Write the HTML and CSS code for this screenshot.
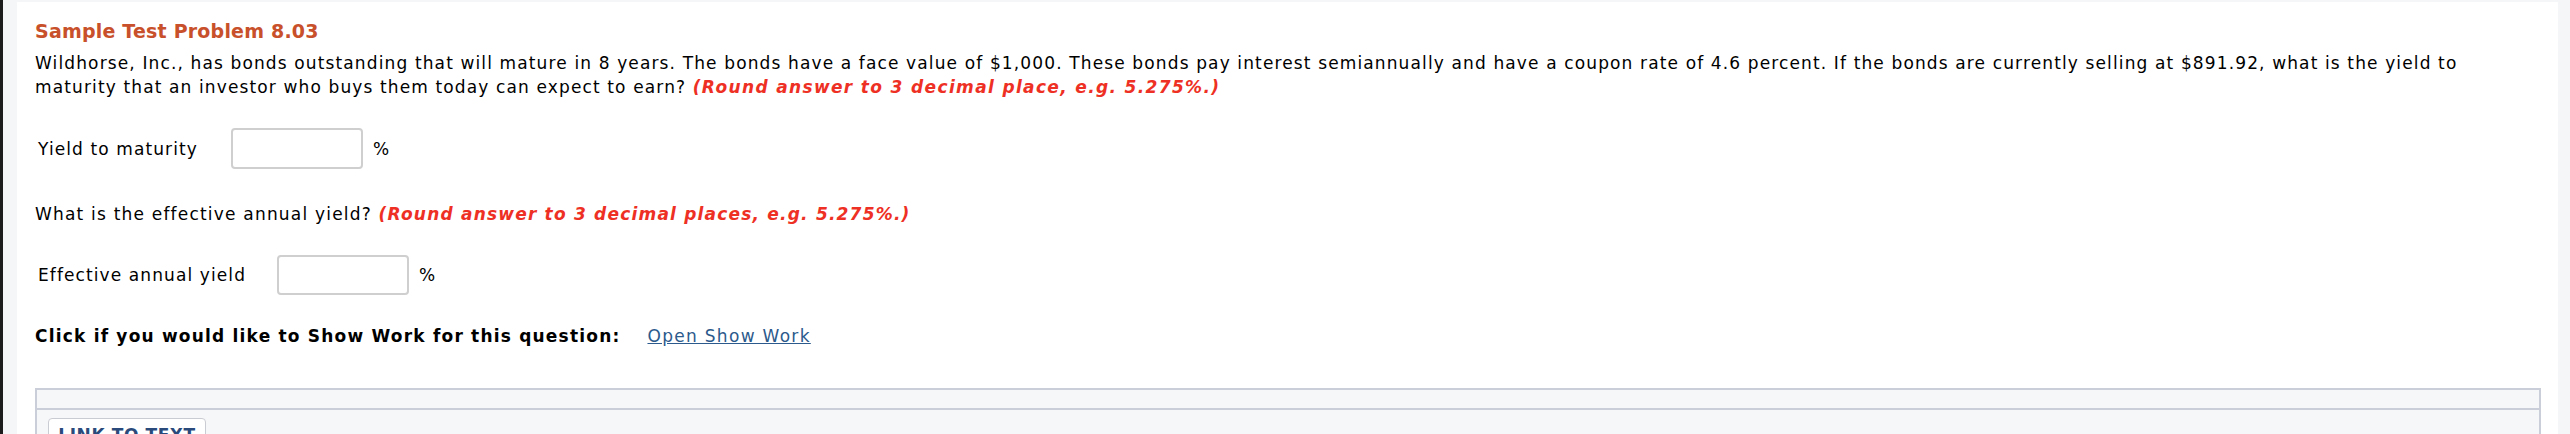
FILE: index.html
```html
<!DOCTYPE html>
<html>
<head>
<meta charset="utf-8">
<link rel="stylesheet" href="styles.css">
</head>
<body>
<div class="page">
  <h2 class="title">Sample Test Problem 8.03</h2>
  <p class="question">Wildhorse, Inc., has bonds outstanding that will mature in 8 years. The bonds have a face value of $1,000. These bonds pay interest semiannually and have a coupon rate of 4.6 percent. If the bonds are currently selling at $891.92, what is the yield to maturity that an investor who buys them today can expect to earn? <em class="hint">(Round answer to 3 decimal place, e.g. 5.275%.)</em></p>
  <div class="answer-row">
    <span class="label">Yield to maturity</span>
    <input class="answer" type="text">
    <span class="unit">%</span>
  </div>
  <p class="question q2">What is the effective annual yield? <em class="hint">(Round answer to 3 decimal places, e.g. 5.275%.)</em></p>
  <div class="answer-row row2">
    <span class="label">Effective annual yield</span>
    <input class="answer" type="text">
    <span class="unit">%</span>
  </div>
  <div class="showwork">
    <strong class="sw-label">Click if you would like to Show Work for this question:</strong>
    <a class="sw-link" href="#">Open Show Work</a>
  </div>
  <div class="panel">
    <div class="panel-head"></div>
    <div class="panel-body">
      <button class="link-btn" type="button">LINK TO TEXT</button>
    </div>
  </div>
</div>
</body>
</html>
```
FILE: styles.css
```css
html, body {
  margin: 0;
  padding: 0;
  height: 100%;
  overflow: hidden;
}
body {
  background: #f5f6f8;
  border-left: 3px solid #1c1c1c;
  box-sizing: border-box;
  font-family: "DejaVu Sans", Verdana, sans-serif;
  color: #000;
}
.page {
  background: #fff;
  margin: 2px 12px 0 14px;
  padding: 18px 17px 0 18px;
  height: 432px;
  overflow: hidden;
  box-sizing: border-box;
}
.title {
  margin: 0;
  font-size: 19px;
  line-height: 22px;
  font-weight: bold;
  letter-spacing: 0.2px;
  color: #c8502a;
}
.question {
  margin: 9px 0 0 0;
  font-size: 17px;
  line-height: 24px;
  letter-spacing: 1.13px;
}
.hint {
  color: #ee3024;
  font-weight: bold;
  font-style: italic;
  letter-spacing: 1.35px;
}
.q2 .hint {
  letter-spacing: 1.2px;
}
.answer-row {
  display: flex;
  align-items: center;
  margin-top: 29px;
  font-size: 17px;
  letter-spacing: 1.1px;
}
.label {
  padding-left: 3px;
  width: 193px;
  white-space: nowrap;
}
.row2 .label {
  width: 239px;
}
.answer {
  width: 132px;
  height: 41px;
  box-sizing: border-box;
  border: 2px solid #cfcfcf;
  border-radius: 4px;
  margin: 0;
  padding: 0;
  background: #fff;
}
.row2 .answer {
  height: 40px;
}
.unit {
  margin-left: 10px;
}
.q2 {
  margin-top: 33px;
  letter-spacing: 1.2px;
}
.showwork {
  margin-top: 29px;
  font-size: 17px;
  line-height: 24px;
  display: flex;
  gap: 27px;
}
.sw-label {
  font-weight: bold;
  letter-spacing: 1.2px;
}
.sw-link {
  color: #2c5a8c;
  text-decoration: underline;
  letter-spacing: 1.3px;
}
.panel {
  margin-top: 40px;
  border: 2px solid #c9ced9;
  border-bottom: 0;
  background: #f6f7f9;
  height: 60px;
}
.panel-head {
  height: 18px;
  border-bottom: 2px solid #c9ced9;
}
.panel-body {
  padding: 8px 11px;
}
.link-btn {
  font-family: "DejaVu Sans", Verdana, sans-serif;
  font-size: 17px;
  font-weight: bold;
  letter-spacing: 0.6px;
  white-space: nowrap;
  color: #2a4a7c;
  background: #fff;
  border: 1px solid #c9ccd3;
  border-radius: 4px;
  padding: 6px 0;
  width: 158px;
  text-align: center;
}
```
